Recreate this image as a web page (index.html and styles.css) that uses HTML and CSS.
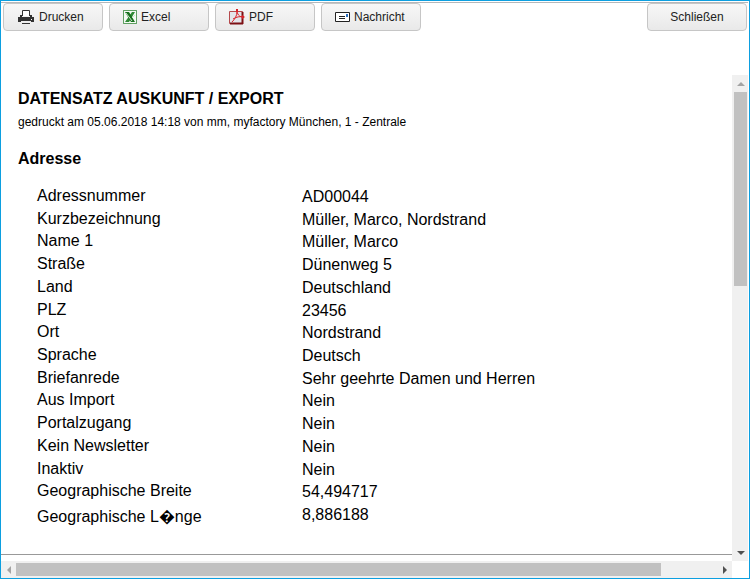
FILE: index.html
```
<!DOCTYPE html>
<html lang="de">
<head>
  <meta charset="UTF-8" />
  <meta name="viewport" content="width=device-width, initial-scale=1.0"/>
  <title>Datensatz Auskunft / Export</title>
  <link rel="stylesheet" href="styles.css">
</head>
<body>
  <div class="window">
    <!-- Toolbar -->
    <div class="toolbar">
      <button type="button">
        <svg width="18" height="14" viewBox="0 0 18 14" aria-hidden="true">
          <path d="M5.500 6V.5h7V6" fill="#fff" stroke="#333"/>
          <path d="M1 7h2V5h2v2h8V5h2v2h2v5h-3v-1H4v1H1z" fill="#333"/>
          <path d="M14 9h1v1h-1z" fill="#fff"/>
          <path d="M5 13.500h8" stroke="#333"/>
        </svg>
        Drucken
      </button>
      <button type="button">
        <svg width="14" height="14" viewBox="0 0 14 14" aria-hidden="true">
          <path d="M.5.5h13v13H.5z" fill="#f4faf4" stroke="#a9cfa9"/>
          <path d="M.5.5h13v13H.5z" fill="none" stroke="#17701d" stroke-dasharray="1 1"/>
          <path d="M9 2h3L6 12H2z" fill="#2f8a35"/>
          <path d="M2 2h4l6 10H8z" fill="#17701d"/>
          <path d="m3 3 6 8M12 5 9 8" stroke="#cfe6cf"/>
        </svg>
        Excel
      </button>
      <button type="button">
        <svg width="16" height="16" viewBox="0 0 16 16" aria-hidden="true">
          <path d="M.5 2.500h13v12H.5z" fill="#e3e5ea" stroke="#b5494c"/>
          <path d="M13.500 3v12M1 14.500h13" fill="none" stroke="#7d1014" stroke-width="2"/>
          <path d="M8 1c0 4 2 7 6 7M8 2c0 5-2 8-5 11M4 10c3-2 7-3 11-2" fill="none" stroke="#d9232a"/>
          <path d="M7 0h2v3H7zM13 6l3 2-3 2z" fill="#d9232a"/>
        </svg>
        PDF
      </button>
      <button type="button">
        <svg width="15" height="10" viewBox="0 0 15 10" aria-hidden="true">
          <path d="M.5.5h14v9H.5z" fill="#fff" stroke="#222"/>
          <path d="M4 4.500h6M4 6.500h6" stroke="#222"/>
          <path d="M11 2h2v3h-2z" fill="#2c6fc0"/>
        </svg>
        Nachricht
      </button>
      <button type="button" class="close">Schließen</button>
    </div>

    <!-- Report with its scrollbars -->
    <div class="viewer">
      <div class="report">
        <h1>DATENSATZ AUSKUNFT / EXPORT</h1>
        <p>gedruckt am 05.06.2018 14:18 von mm, myfactory München, 1 - Zentrale</p>
        <h2>Adresse</h2>
        <table>
          <tr><th scope="row">Adressnummer</th><td>AD00044</td></tr>
          <tr><th scope="row">Kurzbezeichnung</th><td>Müller, Marco, Nordstrand</td></tr>
          <tr><th scope="row">Name 1</th><td>Müller, Marco</td></tr>
          <tr><th scope="row">Straße</th><td>Dünenweg 5</td></tr>
          <tr><th scope="row">Land</th><td>Deutschland</td></tr>
          <tr><th scope="row">PLZ</th><td>23456</td></tr>
          <tr><th scope="row">Ort</th><td>Nordstrand</td></tr>
          <tr><th scope="row">Sprache</th><td>Deutsch</td></tr>
          <tr><th scope="row">Briefanrede</th><td>Sehr geehrte Damen und Herren</td></tr>
          <tr><th scope="row">Aus Import</th><td>Nein</td></tr>
          <tr><th scope="row">Portalzugang</th><td>Nein</td></tr>
          <tr><th scope="row">Kein Newsletter</th><td>Nein</td></tr>
          <tr><th scope="row">Inaktiv</th><td>Nein</td></tr>
          <tr><th scope="row">Geographische Breite</th><td>54,494717</td></tr>
          <tr class="last"><th scope="row"><span>Geographische L&#xFFFD;nge</span></th><td>8,886188</td></tr>
        </table>
      </div>
      <div class="scrollbar vertical">
        <span class="arrow up"></span>
        <div class="track"><div class="thumb"></div></div>
        <span class="arrow down"></span>
      </div>
      <div class="scrollbar horizontal">
        <span class="arrow left"></span>
        <div class="track"><div class="thumb"></div></div>
        <span class="arrow right"></span>
      </div>
    </div>
  </div>
</body>
</html>
```

FILE: styles.css
```
* {
  box-sizing: border-box;
}

body {
  margin: 0;
  font-family: "Liberation Sans", Arial, sans-serif;
  color: #000;
  background-color: #fff;
}

.window {
  display: flex;
  flex-direction: column;
  min-height: 100vh;
  padding: 1px 1px 0 0;
  border: 1px solid #0c9fe0;
}

.toolbar {
  display: flex;
  gap: 6px;
  padding: 0 1px 0 2px;
  margin-bottom: 44px;
  border-top: 1px solid #b4b8bb;
}

button {
  display: flex;
  align-items: center;
  gap: 4px;
  width: 100px;
  height: 28px;
  padding: 0 0 0 13px;
  border: 1px solid #c6c6c6;
  border-radius: 4px;
  background: linear-gradient(#f7f7f7, #e9e9e9);
  font-family: inherit;
  font-size: 12px;
  color: #222;
}

button.close {
  justify-content: center;
  margin-left: auto;
  padding: 0;
}

.viewer {
  flex: 1;
  display: grid;
  grid-template-columns: 1fr 16px;
  grid-template-rows: 1fr 17px;
}

.report {
  padding: 14px 17px 25px;
  margin-bottom: 6px;
  border-bottom: 1px solid #999;
}

h1,
h2 {
  margin: 0;
  font-size: 16px;
  line-height: 20px;
}

p {
  margin: 5px 0 19px;
  font-size: 12px;
  line-height: 16px;
}

table {
  width: 95%;
  height: 341px;
  margin-top: 17px;
  margin-left: 19px;
  border-collapse: collapse;
  font-size: 16px;
  line-height: 20px;
}

th,
td {
  padding: 0;
  text-align: left;
  vertical-align: top;
  font-weight: normal;
}

th {
  width: 265px;
}

td {
  padding-top: 1px;
}

.last th {
  padding-top: 3px;
}

.last span {
  display: block;
  height: 18px;
  overflow: hidden;
}

/* Scrollbars */
.scrollbar {
  display: flex;
  background-color: #f0f0f0;
}

.vertical {
  flex-direction: column;
  padding: 0 1px 0 2px;
}

.horizontal {
  padding: 2px 0;
}

.track {
  flex: 1;
}

.thumb {
  background-color: #c1c1c1;
}

.vertical .thumb {
  height: 43%;
}

.horizontal .thumb {
  width: 92%;
  height: 100%;
}

.arrow {
  display: flex;
  align-items: center;
  justify-content: center;
  width: 15px;
  height: 17px;
}

.vertical .arrow {
  width: 100%;
}

.horizontal .arrow {
  height: 100%;
}

.arrow::before {
  content: "";
  border: 4px solid transparent;
}

.up::before {
  border-top: 0;
  border-bottom-color: #a3a3a3;
}

.down::before {
  border-bottom: 0;
  border-top-color: #505050;
}

.left::before {
  border-left: 0;
  border-right-color: #a3a3a3;
}

.right::before {
  border-right: 0;
  border-left-color: #505050;
}
```
